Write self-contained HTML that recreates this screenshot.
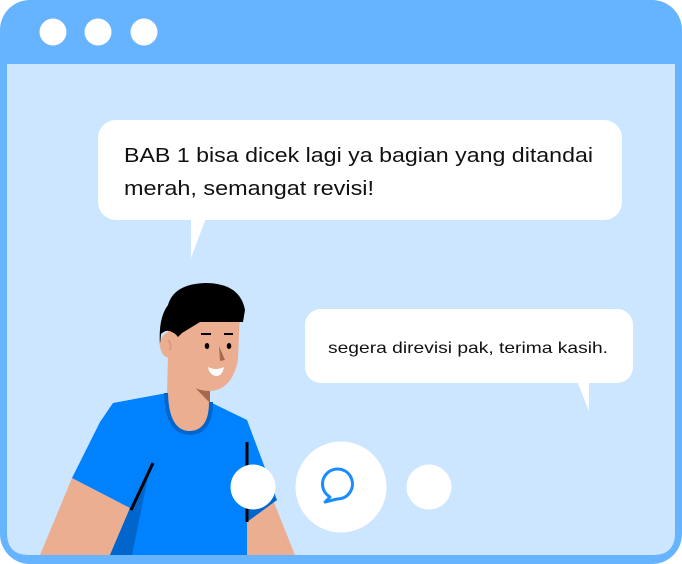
<!DOCTYPE html>
<html><head><meta charset="utf-8"><style>
html,body{margin:0;padding:0;background:#fff;}
svg{display:block;}
</style></head><body>
<svg width="682" height="564" viewBox="0 0 682 564" xmlns="http://www.w3.org/2000/svg">
<rect x="0" y="0" width="682" height="564" rx="30" fill="#66b3ff"/>
<path d="M7 64 H675 V533 Q675 555 653 555 H29 Q7 555 7 533 Z" fill="#cce6ff"/>
<ellipse cx="53" cy="32" rx="13.5" ry="13.5" fill="#fff"/>
<ellipse cx="98" cy="32" rx="13.5" ry="13.5" fill="#fff"/>
<ellipse cx="144" cy="32" rx="13.5" ry="13.5" fill="#fff"/>

<rect x="98" y="120" width="524" height="100" rx="18" fill="#fff"/>
<polygon points="191,218 206,218 191,258" fill="#fff"/>
<text x="124" y="162" font-family="Liberation Sans, sans-serif" font-size="20" fill="#111" textLength="469" lengthAdjust="spacingAndGlyphs">BAB 1 bisa dicek lagi ya bagian yang ditandai</text>
<text x="124" y="195" font-family="Liberation Sans, sans-serif" font-size="20" fill="#111" textLength="250" lengthAdjust="spacingAndGlyphs">merah, semangat revisi!</text>

<rect x="305" y="309" width="328" height="74" rx="16" fill="#fff"/>
<polygon points="577,381 589,381 589,411" fill="#fff"/>
<text x="328" y="353" font-family="Liberation Sans, sans-serif" font-size="16" fill="#111" textLength="280" lengthAdjust="spacingAndGlyphs">segera direvisi pak, terima kasih.</text>

<polygon points="72,478 130,508 122,555 40,555" fill="#ecae91"/>
<polygon points="247,520 273,500 295,555 247,555" fill="#ecae91"/>
<polygon points="72,478 100,422 113,403 167,393 210,402 247,420 277,500 247,520 247,555 110,555 130,508" fill="#0082ff"/>
<polygon points="130,508 150,467 132,555 110,555" fill="#0066cc"/>
<polygon points="247,522 277,500 273,495 247,510" fill="#0066cc"/>
<path d="M168 355 L210 355 L210 403 Q210 432 190 433 Q167 432 167 393 Z" fill="#ecae91"/>
<path d="M168 360 L210 380 L210 403 Z" fill="#a5694f"/>
<path d="M166 393 Q167 433 190 433 Q211 432 211 402" fill="none" stroke="#0066cc" stroke-width="4"/>
<path d="M168 312 L240 312 L238 360 Q232 390 210 391 Q190 391 174 372 L168 360 Z" fill="#ecae91"/>
<path d="M160 346 Q158 318 168 305 Q174 284 205 283 Q240 283 245 310 L243 322 Q230 322 200 322 L182 333 L177 338 Q170 326 161 334 Z" fill="#000"/>
<ellipse cx="170" cy="345" rx="10" ry="13" fill="#ecae91"/>
<path d="M168 340 Q172 344 170 350" fill="none" stroke="#d99a7d" stroke-width="2"/>
<rect x="201" y="333" width="10" height="2" fill="#000"/>
<rect x="224" y="333" width="9" height="2" fill="#000"/>
<ellipse cx="207" cy="346" rx="2.3" ry="3" fill="#000"/>
<ellipse cx="229" cy="346" rx="2.3" ry="3" fill="#000"/>
<polygon points="219,346 225,360 220,361" fill="#a5694f"/>
<path d="M208 367 Q216 371 224 367 Q222 377 215 376 Q209 374 208 367 Z" fill="#fff"/>
<line x1="153" y1="463" x2="131" y2="510" stroke="#000" stroke-width="3"/>
<line x1="247" y1="442" x2="247" y2="522" stroke="#000" stroke-width="3"/>

<circle cx="253" cy="487" r="22.5" fill="#fff"/>
<circle cx="341" cy="487" r="45.5" fill="#fff"/>
<circle cx="429" cy="487" r="22.5" fill="#fff"/>
<path d="M330 497 A15 15 0 1 1 337 499 L325 502 Z" fill="none" stroke="#1a8cff" stroke-width="3" stroke-linejoin="round"/>
</svg>
</body></html>
